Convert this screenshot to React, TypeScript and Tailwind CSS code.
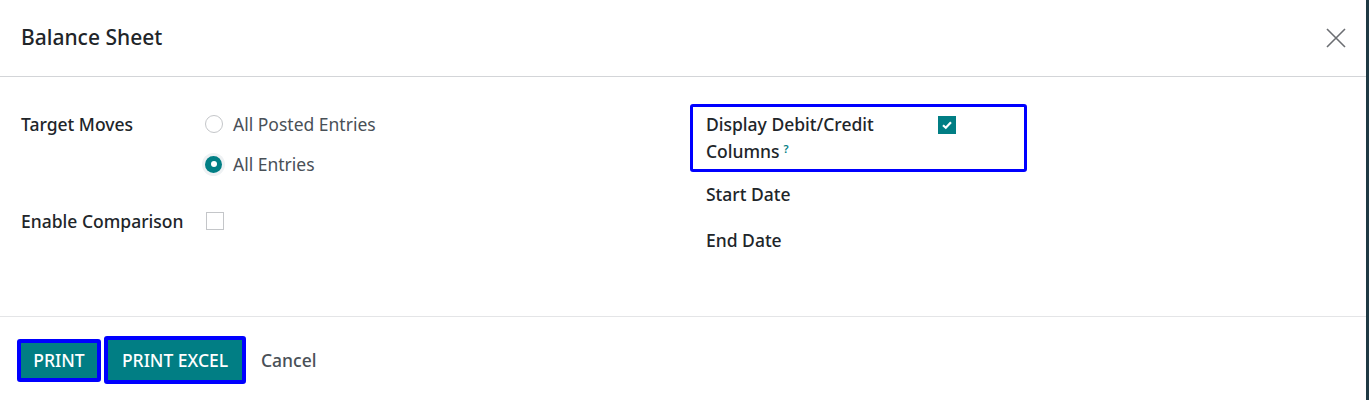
import React from "react";

const teal = "bg-[#017e84]";

function Radio({ checked }: { checked?: boolean }) {
  if (checked) {
    return (
      <span className="flex h-[23px] w-[23px] items-center justify-center rounded-full bg-[#eef1f3]">
        <span className="flex h-[17px] w-[17px] items-center justify-center rounded-full bg-[#017e84]">
          <span className="h-[6px] w-[6px] rounded-full bg-white" />
        </span>
      </span>
    );
  }
  return (
    <span className="flex h-[23px] w-[23px] items-center justify-center">
      <span className="h-[18px] w-[18px] rounded-full border border-[#c4c6c9] bg-white" />
    </span>
  );
}

export default function App() {
  return (
    <div
      className="flex h-[400px] w-[1369px] bg-[#1f3a44]"
      style={{ fontFamily: '"Noto Sans", "Open Sans", sans-serif' }}
    >
      <div className="flex h-full w-[1366px] flex-col bg-white">
        {/* Header */}
        <div className="flex h-[77px] shrink-0 items-center justify-between border-b border-[#d3d5d8] pl-[21px] pr-[19px]">
          <h4 className="text-[21px] font-medium text-[#212529]">Balance Sheet</h4>
          <svg width="22" height="22" viewBox="0 0 22 22" className="text-[#6b6e72]">
            <path d="M2 2 L20 20 M20 2 L2 20" stroke="currentColor" strokeWidth="1.6" fill="none" />
          </svg>
        </div>

        {/* Body */}
        <div className="grid h-[240px] shrink-0 grid-cols-[669px_1fr] border-b border-[#e4e5e7] pt-[27px]">
          {/* Left */}
          <div className="flex flex-col pl-[21px]">
            <div className="flex">
              <div className="flex h-[40px] w-[181px] items-center text-[17.5px] font-medium text-[#212529]">
                Target Moves
              </div>
              <div className="flex flex-col">
                <div className="flex h-[40px] items-center gap-[8px] text-[17.5px] text-[#495057]">
                  <Radio />
                  <span>All Posted Entries</span>
                </div>
                <div className="flex h-[40px] items-center gap-[8px] text-[17.5px] text-[#495057]">
                  <Radio checked />
                  <span>All Entries</span>
                </div>
              </div>
            </div>
            <div className="mt-[17px] flex h-[40px] items-center">
              <div className="w-[185px] text-[17.5px] font-medium text-[#212529]">Enable Comparison</div>
              <span className="h-[18px] w-[18px] border border-[#c4c6c9] bg-white" />
            </div>
          </div>

          {/* Right */}
          <div className="flex flex-col pl-[21px]">
            <div className="flex w-[337px] rounded-[3px] border-[3px] border-[#0000ff] py-[4px] pl-[13px]">
              <div className="w-[232px] text-[17.5px] font-medium leading-[27px] text-[#212529]">
                Display Debit/Credit
                <br />
                Columns
                <sup className="ml-[4px] text-[11px] font-semibold text-[#017e84]">?</sup>
              </div>
              <div className="pt-[5px]">
                <span className={`flex h-[18px] w-[18px] items-center justify-center ${teal}`}>
                  <svg width="14" height="14" viewBox="0 0 14 14">
                    <path d="M3 7.2 L5.8 9.8 L11 4.2" stroke="white" strokeWidth="2.2" fill="none" />
                  </svg>
                </span>
              </div>
            </div>
            <div className="flex h-[45px] items-center pl-[16px] text-[17.5px] font-medium text-[#212529]">
              Start Date
            </div>
            <div className="flex h-[46px] items-center pl-[16px] text-[17.5px] font-medium text-[#212529]">
              End Date
            </div>
          </div>
        </div>

        {/* Footer */}
        <div className="flex items-center gap-[3px] pl-[17px] pt-[19px]">
          <div className="rounded-[3px] border-[4px] border-[#0000ff]">
            <div className={`flex h-[35px] w-[76px] items-center justify-center ${teal} text-[17.5px] font-medium text-white`}>
              PRINT
            </div>
          </div>
          <div className="rounded-[3px] border-[4px] border-[#0000ff]">
            <div className={`flex h-[40px] w-[134px] items-center justify-center ${teal} text-[17.5px] font-medium text-white`}>
              PRINT EXCEL
            </div>
          </div>
          <div className="ml-[12px] text-[17.5px] font-medium text-[#495057]">Cancel</div>
        </div>
      </div>
    </div>
  );
}
